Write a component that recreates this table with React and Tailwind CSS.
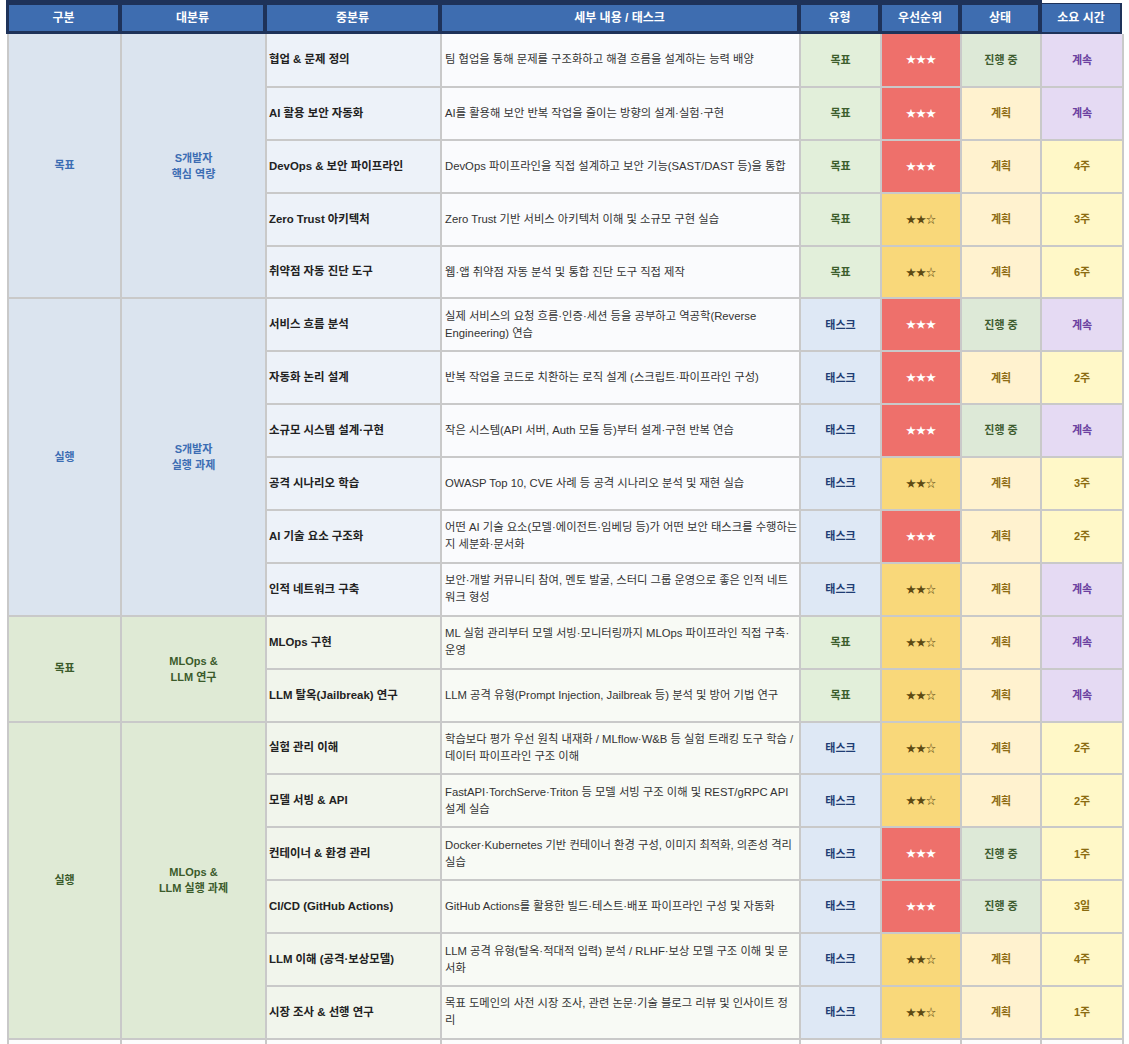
import React from "react";

const heads = [
  { label: "구분", w: "w-[109px]" },
  { label: "대분류", w: "w-[141px]" },
  { label: "중분류", w: "w-[171px]" },
  { label: "세부 내용 / 태스크", w: "w-[355px]" },
  { label: "유형", w: "w-[77px]" },
  { label: "우선순위", w: "w-[76px]" },
  { label: "상태", w: "w-[76px]" },
];

const sections = [
  {
    tone: "blue",
    group: "목표",
    category: "S개발자\n핵심 역량",
    rows: [
      ["협업 & 문제 정의", "팀 협업을 통해 문제를 구조화하고 해결 흐름을 설계하는 능력 배양", "목표", 3, "진행 중", "계속"],
      ["AI 활용 보안 자동화", "AI를 활용해 보안 반복 작업을 줄이는 방향의 설계·실험·구현", "목표", 3, "계획", "계속"],
      ["DevOps & 보안 파이프라인", "DevOps 파이프라인을 직접 설계하고 보안 기능(SAST/DAST 등)을 통합", "목표", 3, "계획", "4주"],
      ["Zero Trust 아키텍처", "Zero Trust 기반 서비스 아키텍처 이해 및 소규모 구현 실습", "목표", 2, "계획", "3주"],
      ["취약점 자동 진단 도구", "웹·앱 취약점 자동 분석 및 통합 진단 도구 직접 제작", "목표", 2, "계획", "6주"],
    ],
  },
  {
    tone: "blue",
    group: "실행",
    category: "S개발자\n실행 과제",
    rows: [
      ["서비스 흐름 분석", "실제 서비스의 요청 흐름·인증·세션 등을 공부하고 역공학(Reverse Engineering) 연습", "태스크", 3, "진행 중", "계속"],
      ["자동화 논리 설계", "반복 작업을 코드로 치환하는 로직 설계 (스크립트·파이프라인 구성)", "태스크", 3, "계획", "2주"],
      ["소규모 시스템 설계·구현", "작은 시스템(API 서버, Auth 모듈 등)부터 설계·구현 반복 연습", "태스크", 3, "진행 중", "계속"],
      ["공격 시나리오 학습", "OWASP Top 10, CVE 사례 등 공격 시나리오 분석 및 재현 실습", "태스크", 2, "계획", "3주"],
      ["AI 기술 요소 구조화", "어떤 AI 기술 요소(모델·에이전트·임베딩 등)가 어떤 보안 태스크를 수행하는지 세분화·문서화", "태스크", 3, "계획", "2주"],
      ["인적 네트워크 구축", "보안·개발 커뮤니티 참여, 멘토 발굴, 스터디 그룹 운영으로 좋은 인적 네트워크 형성", "태스크", 2, "계획", "계속"],
    ],
  },
  {
    tone: "green",
    group: "목표",
    category: "MLOps &\nLLM 연구",
    rows: [
      ["MLOps 구현", "ML 실험 관리부터 모델 서빙·모니터링까지 MLOps 파이프라인 직접 구축·운영", "목표", 2, "계획", "계속"],
      ["LLM 탈옥(Jailbreak) 연구", "LLM 공격 유형(Prompt Injection, Jailbreak 등) 분석 및 방어 기법 연구", "목표", 2, "계획", "계속"],
    ],
  },
  {
    tone: "green",
    group: "실행",
    category: "MLOps &\nLLM 실행 과제",
    rows: [
      ["실험 관리 이해", "학습보다 평가 우선 원칙 내재화 / MLflow·W&B 등 실험 트래킹 도구 학습 / 데이터 파이프라인 구조 이해", "태스크", 2, "계획", "2주"],
      ["모델 서빙 & API", "FastAPI·TorchServe·Triton 등 모델 서빙 구조 이해 및 REST/gRPC API 설계 실습", "태스크", 2, "계획", "2주"],
      ["컨테이너 & 환경 관리", "Docker·Kubernetes 기반 컨테이너 환경 구성, 이미지 최적화, 의존성 격리 실습", "태스크", 3, "진행 중", "1주"],
      ["CI/CD (GitHub Actions)", "GitHub Actions를 활용한 빌드·테스트·배포 파이프라인 구성 및 자동화", "태스크", 3, "진행 중", "3일"],
      ["LLM 이해 (공격·보상모델)", "LLM 공격 유형(탈옥·적대적 입력) 분석 / RLHF·보상 모델 구조 이해 및 문서화", "태스크", 2, "계획", "4주"],
      ["시장 조사 & 선행 연구", "목표 도메인의 사전 시장 조사, 관련 논문·기술 블로그 리뷰 및 인사이트 정리", "태스크", 2, "계획", "1주"],
    ],
  },
];

const tones = {
  blue: {
    group: "bg-[#dbe4ef] text-[#3b6db3]",
    sub: "bg-[#edf2f9]",
    detail: "bg-[#fafbfd]",
  },
  green: {
    group: "bg-[#dfead5] text-[#3b5b2b]",
    sub: "bg-[#f1f5ec]",
    detail: "bg-[#f8faf5]",
  },
};

const cell = "border-2 border-[#c9c9c9]";

const typeStyle = (type) =>
  type === "목표" ? "bg-[#e2efda] text-[#3d5e2d]" : "bg-[#dee8f5] text-[#1f3d73]";

const statusStyle = (status) =>
  status === "진행 중" ? "bg-[#dde9d7] text-[#3e5c30]" : "bg-[#fff2cf] text-[#8e6c14]";

const timeStyle = (time) =>
  time === "계속" ? "bg-[#e5daf3] text-[#6b3fa0]" : "bg-[#fff8c8] text-[#8a6b0f]";

const App = () => {
  let rowIndex = 0;

  return (
    <div className="bg-white w-[1129px] h-[1044px] overflow-hidden font-['Liberation_Sans','Noto_Sans_CJK_KR',sans-serif]">
      <div className="flex h-[34px]">
        <div className="ml-[6px] flex gap-[4px] bg-[#1e3259] pt-[5px] pb-[3px] pl-[3px] pr-[4px]">
          {heads.map((h) => (
            <div
              key={h.label}
              className={`${h.w} flex items-center justify-center bg-[#3e6db0] text-white font-bold text-[12px]`}
            >
              {h.label}
            </div>
          ))}
        </div>
        <div className="mt-[3px] w-[80px] flex items-center justify-center bg-[#3e6db0] border-t border-r-2 border-b-2 border-[#1e3259] text-white font-bold text-[12px]">
          소요 시간
        </div>
      </div>

      <table className="table-fixed border-collapse w-[1115px] ml-[7px]">
        <colgroup>
          <col className="w-[113px]" />
          <col className="w-[145px]" />
          <col className="w-[175px]" />
          <col className="w-[359px]" />
          <col className="w-[81px]" />
          <col className="w-[80px]" />
          <col className="w-[80px]" />
          <col className="w-[82px]" />
        </colgroup>
        <tbody>
          {sections.map((section) =>
            section.rows.map((row, i) => {
              const [sub, detail, type, stars, status, time] = row;
              const first = rowIndex === 0;
              rowIndex += 1;
              const top = first ? "border-t-0" : "";
              const t = tones[section.tone];
              return (
                <tr key={sub} className="h-[52.9px]">
                  {i === 0 && (
                    <>
                      <td
                        rowSpan={section.rows.length}
                        className={`${cell} ${top} ${t.group} text-center font-bold text-[11px]`}
                      >
                        {section.group}
                      </td>
                      <td
                        rowSpan={section.rows.length}
                        className={`${cell} ${top} ${t.group} text-center font-bold text-[11px] leading-[16px] whitespace-pre-line`}
                      >
                        {section.category}
                      </td>
                    </>
                  )}
                  <td className={`${cell} ${top} ${t.sub} px-[2px] font-bold text-[11.4px] text-[#222]`}>
                    {sub}
                  </td>
                  <td className={`${cell} ${top} ${t.detail} pl-[3px] pr-[1px] text-[11.3px] leading-[17px] text-[#333]`}>
                    {detail}
                  </td>
                  <td className={`${cell} ${top} ${typeStyle(type)} text-center font-bold text-[11px]`}>
                    {type}
                  </td>
                  <td
                    className={`${cell} ${top} text-center text-[10px] ${
                      stars === 3 ? "bg-[#ee706b] text-white" : "bg-[#f9d87a] text-[#5d4a12]"
                    }`}
                  >
                    {stars === 3 ? "★★★" : "★★☆"}
                  </td>
                  <td className={`${cell} ${top} ${statusStyle(status)} text-center font-bold text-[11px]`}>
                    {status}
                  </td>
                  <td className={`${cell} ${top} ${timeStyle(time)} text-center font-bold text-[11px]`}>
                    {time}
                  </td>
                </tr>
              );
            })
          )}
          <tr className="h-[52.9px]">
            <td className={`${cell} bg-[#fdfdfd]`}></td>
            <td className={`${cell} bg-[#fdfdfd]`}></td>
            <td className={`${cell} bg-[#fdfdfd]`}></td>
            <td className={`${cell} bg-[#fdfdfd]`}></td>
            <td className={`${cell} bg-[#fdfdfd]`}></td>
            <td className={`${cell} bg-[#fdfdfd]`}></td>
            <td className={`${cell} bg-[#fdfdfd]`}></td>
            <td className={`${cell} bg-[#fdfdfd]`}></td>
          </tr>
        </tbody>
      </table>
    </div>
  );
};

export default App;
